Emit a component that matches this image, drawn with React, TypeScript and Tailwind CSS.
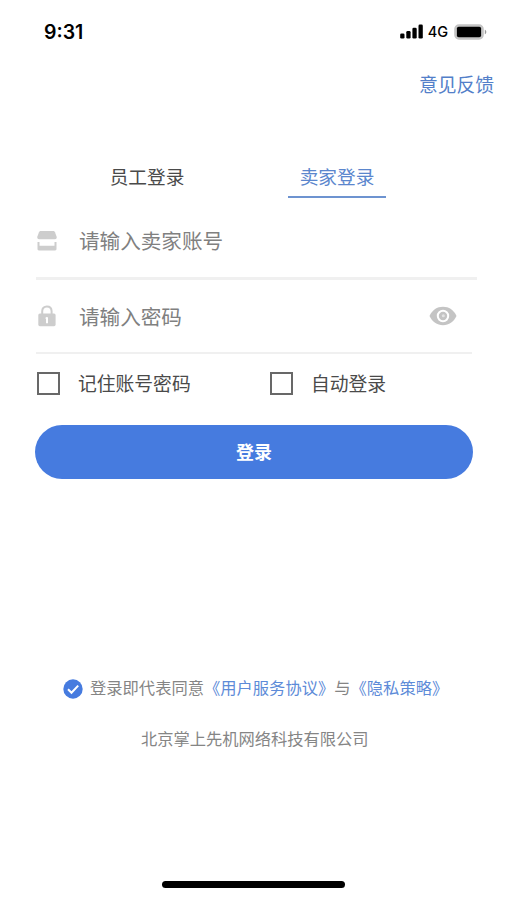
import React, { useState } from 'react';

function SignalIcon() {
  return (
    <svg width="24" height="16" viewBox="0 0 24 16" fill="#000">
      <rect x="0.2" y="9.4" width="4.3" height="5.2" rx="1.3" />
      <rect x="6.3" y="6.9" width="4.3" height="7.7" rx="1.3" />
      <rect x="12.4" y="3.7" width="4.3" height="10.9" rx="1.3" />
      <rect x="18.5" y="0.6" width="4.3" height="14" rx="1.3" />
    </svg>
  );
}

function BatteryIcon() {
  return (
    <svg width="34" height="17" viewBox="0 0 34 17">
      <rect x="1" y="1.1" width="28" height="13.8" rx="4" fill="#c4c4c4" stroke="#c4c4c4" strokeWidth="1.6" />
      <rect x="2.9" y="2.7" width="24.2" height="10.6" rx="1.8" fill="#000" />
      <path d="M30.8 5.8c2 .7 2 3.8 0 4.5z" fill="#999" />
    </svg>
  );
}

function ShopIcon() {
  return (
    <svg width="22" height="20" viewBox="0 0 22 20" fill="#cdcdcd">
      <path d="M5 0h12c1 0 1.600.3 2 1.200l1.600 4.300c.5 1.800-.3 2.700-1.800 2.700H3.200C1.700 8.200.9 7.300 1.400 5.500L3 1.200C3.400.3 4 0 5 0z" />
      <path d="M1.500 11h2v3.800h15V11h2v7c0 .9-.5 1.400-1.400 1.400H2.900c-.9 0-1.400-.5-1.400-1.400z" />
    </svg>
  );
}

function LockIcon() {
  return (
    <svg width="20" height="22" viewBox="0 0 20 22">
      <path d="M5.200 9V6.200C5.200 3.300 7 1.400 9.900 1.400s4.700 1.900 4.700 4.800V9" fill="none" stroke="#cdcdcd" strokeWidth="2" />
      <rect x="1.300" y="8.500" width="17.300" height="12.700" rx="1.600" fill="#cdcdcd" />
      <path d="M9 12.200h2v6H9z" fill="#fff" />
      <path d="M8 13.300l1.600-1.600v2z" fill="#fff" />
    </svg>
  );
}

function EyeIcon() {
  return (
    <svg width="28" height="20" viewBox="0 0 28 20">
      <path d="M.5 10C3.300 4 8 .8 14 .8S24.700 4 27.500 10C24.700 16 20 19.200 14 19.200S3.300 16 .5 10z" fill="#c4c4c4" />
      <circle cx="14" cy="10" r="5.200" fill="#c4c4c4" stroke="#fff" strokeWidth="2" />
      <circle cx="14.300" cy="9.700" r="1.500" fill="#fff" opacity=".55" />
    </svg>
  );
}

function CheckBox({ label, checked, onChange }: { label: string; checked: boolean; onChange: () => void }) {
  return (
    <button className="flex items-center" onClick={onChange}>
      <span className="flex h-[23px] w-[23px] items-center justify-center border-2 border-[#686868]">
        {checked && <span className="h-3 w-3 bg-[#467bdf]" />}
      </span>
      <span className="ml-[18px] pb-px text-[18.8px] leading-7 text-[#4a4a4a]">{label}</span>
    </button>
  );
}

export default function App() {
  const [tab, setTab] = useState('seller');
  const [show, setShow] = useState(false);
  const [remember, setRemember] = useState(false);
  const [auto, setAuto] = useState(false);

  return (
    <div className="flex h-[900px] w-[507px] flex-col overflow-hidden bg-white font-['Noto_Sans_CJK_SC',sans-serif]">
      {/* status bar */}
      <div className="flex h-[62px] items-center justify-between pl-[44px] pr-[19px] pt-[2px] font-['Inter',sans-serif] text-black">
        <span className="pt-px text-[19.5px] font-semibold">9:31</span>
        <div className="flex items-center">
          <SignalIcon />
          <span className="ml-[4px] mr-[6px] text-[14.5px] font-medium">4G</span>
          <BatteryIcon />
        </div>
      </div>

      <div className="flex h-[46px] items-center justify-end pb-px pr-[13px]">
        <a className="text-[18.8px] text-[#537fc9]">意见反馈</a>
      </div>

      <div className="mt-[48px] flex h-[42px] pl-[98px]">
        <button className="flex h-[42px] w-[98px] justify-center text-[18.7px] leading-[40px] text-[#4a4a4a]" onClick={() => setTab('staff')}>
          员工登录
        </button>
        <button className="ml-[92px] flex h-[42px] w-[98px] justify-center border-b-2 border-[#6d93d0] text-[18.7px] leading-[40px] text-[#5b86cd]" onClick={() => setTab('seller')}>
          卖家登录
        </button>
      </div>

      <div className="ml-[36px] flex h-[82px] w-[441px] items-center border-b-[3px] border-[#f0f0f0] pt-[6px]">
        <ShopIcon />
        <input
          className="ml-[21px] flex-1 text-[20.6px] text-[#4a4a4a] outline-none placeholder:text-[#808080]"
          placeholder={tab === 'seller' ? '请输入卖家账号' : '请输入员工账号'}
        />
      </div>
      <div className="ml-[36px] flex h-[74px] w-[436px] items-center border-b-2 border-[#f0f0f0] pt-px">
        <span className="mb-px ml-[1px]">
          <LockIcon />
        </span>
        <input
          type={show ? 'text' : 'password'}
          className="ml-[22px] flex-1 text-[20.6px] text-[#4a4a4a] outline-none placeholder:text-[#808080]"
          placeholder="请输入密码"
        />
        <button className="mb-[2px] mr-[15px]" onClick={() => setShow(!show)}>
          <EyeIcon />
        </button>
      </div>

      <div className="ml-[37px] mt-[15px] flex h-[28px] items-center">
        <div className="w-[233px]">
          <CheckBox label="记住账号密码" checked={remember} onChange={() => setRemember(!remember)} />
        </div>
        <CheckBox label="自动登录" checked={auto} onChange={() => setAuto(!auto)} />
      </div>

      <button className="ml-[35px] mt-[28px] h-[54px] w-[438px] rounded-full bg-[#467bdf] pb-[2px] text-[18px] font-bold text-white">
        登录
      </button>

      <div className="mt-[197px] flex h-[24px] items-center pl-[63px] text-[16.3px] text-[#858585]">
        <svg className="mr-[8px] mt-px" width="20" height="20" viewBox="0 0 20 20">
          <circle cx="10" cy="10" r="9.700" fill="#467bdf" />
          <path d="M5 10.200l3.500 3.500L15.200 6.600" fill="none" stroke="#fff" strokeWidth="2" />
        </svg>
        <span className="-ml-px whitespace-nowrap pb-[2px]">
          登录即代表同意<a className="text-[#5d8bd8]">《用户服务协议》</a>与<a className="text-[#5d8bd8]">《隐私策略》</a>
        </span>
      </div>
      <p className="mt-[26px] pl-[141px] text-[16.25px] leading-6 text-[#858585]">北京掌上先机网络科技有限公司</p>

      <div className="mb-[12px] ml-[162px] mt-auto h-[7px] w-[183px] rounded-full bg-black" />
    </div>
  );
}
